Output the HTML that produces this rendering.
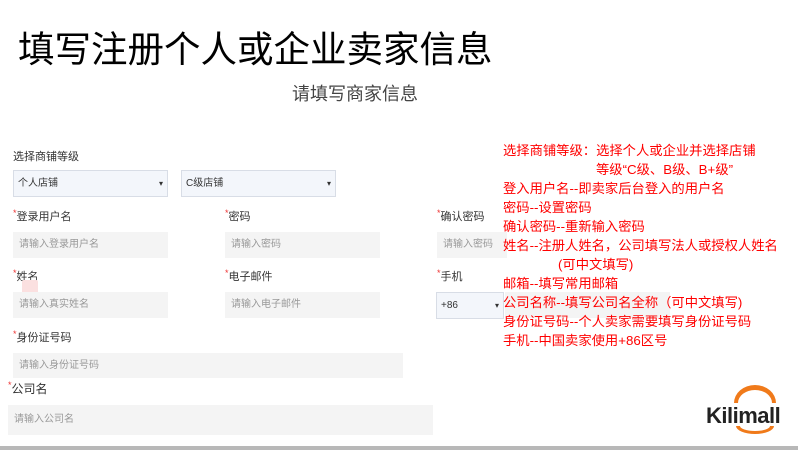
<!DOCTYPE html>
<html><head><meta charset="utf-8"><style>
body{margin:0;width:798px;height:450px;background:#fff;position:relative;overflow:hidden;font-family:"Liberation Sans","Noto Sans CJK SC",sans-serif}
.a{position:absolute;white-space:nowrap}
.l{font-size:11px;color:#333}
.l i{color:#e33;font-style:normal;font-size:9px;vertical-align:top}
.in{position:absolute;background:#f4f4f4;font-size:10px;color:#999;line-height:26px;padding-left:6px;box-sizing:border-box;height:26px}
.sel{position:absolute;background:#f3f6fb;border:1px solid #d8dde6;font-size:10px;color:#333;line-height:25px;padding-left:4px;box-sizing:border-box;height:27px}
.sel:after{content:"▾";position:absolute;right:4px;font-size:8px}
.r{color:#f00;font-size:13.3px;line-height:19px}
</style></head><body>
<div class="a" style="left:18px;top:20px;font-size:36.5px;color:#000;font-family:'Noto Sans CJK SC',sans-serif">填写注册个人或企业卖家信息</div>
<div class="a" style="left:292px;top:80px;font-size:18px;color:#444">请填写商家信息</div>
<div class="a l" style="left:13px;top:148px">选择商铺等级</div>
<div class="sel" style="left:13px;top:170px;width:155px">个人店铺</div>
<div class="sel" style="left:181px;top:170px;width:155px">C级店铺</div>
<div class="a l" style="left:13px;top:208px"><i>*</i>登录用户名</div>
<div class="a l" style="left:225px;top:208px"><i>*</i>密码</div>
<div class="a l" style="left:437px;top:208px"><i>*</i>确认密码</div>
<div class="in" style="left:13px;top:232px;width:155px">请输入登录用户名</div>
<div class="in" style="left:225px;top:232px;width:155px">请输入密码</div>
<div class="in" style="left:437px;top:232px;width:70px">请输入密码</div>
<div class="a l" style="left:13px;top:268px"><i>*</i>姓名</div>
<div class="a l" style="left:225px;top:268px"><i>*</i>电子邮件</div>
<div class="a l" style="left:437px;top:268px"><i>*</i>手机</div>
<div class="a" style="left:22px;top:280px;width:16px;height:16px;background:#fbe0e0;border-radius:2px"></div>
<div class="in" style="left:13px;top:292px;width:155px">请输入真实姓名</div>
<div class="in" style="left:225px;top:292px;width:155px">请输入电子邮件</div>
<div class="sel" style="left:436px;top:292px;width:68px">+86</div>
<div class="in" style="left:505px;top:292px;width:165px"></div>
<div class="a l" style="left:13px;top:329px"><i>*</i>身份证号码</div>
<div class="in" style="left:13px;top:353px;width:390px;height:25px">请输入身份证号码</div>
<div class="a l" style="left:8px;top:380px;font-size:12px"><i>*</i>公司名</div>
<div class="in" style="left:8px;top:405px;width:425px;height:30px;line-height:30px">请输入公司名</div>
<div class="a r" style="left:503px;top:141px">选择商铺等级：选择个人或企业并选择店铺<br><span style="padding-left:93px">等级“C级、B级、B+级”</span><br>登入用户名--即卖家后台登入的用户名<br>密码--设置密码<br>确认密码--重新输入密码<br>姓名--注册人姓名，公司填写法人或授权人姓名<br><span style="padding-left:55px">(可中文填写)</span><br>邮箱--填写常用邮箱<br>公司名称--填写公司名全称（可中文填写)<br>身份证号码--个人卖家需要填写身份证号码<br>手机--中国卖家使用+86区号</div>
<svg class="a" style="left:730px;top:383px" width="50" height="20" viewBox="0 0 50 20"><path d="M4 20 A21 18 0 0 1 46 20 L42 20 A17 13 0 0 0 8 20Z" fill="#f07a1a"/></svg>
<div class="a" style="left:706px;top:403px;font-size:22px;font-weight:bold;color:#222;letter-spacing:-0.5px">Kilimall</div>
<svg class="a" style="left:730px;top:426px" width="50" height="9"><path d="M6 0 A19 8 0 0 0 44 0 L40 0 A15 5 0 0 1 10 0Z" fill="#f07a1a"/></svg>
<div class="a" style="left:0;top:446px;width:798px;height:4px;background:#b8b8b8"></div>
</body></html>
